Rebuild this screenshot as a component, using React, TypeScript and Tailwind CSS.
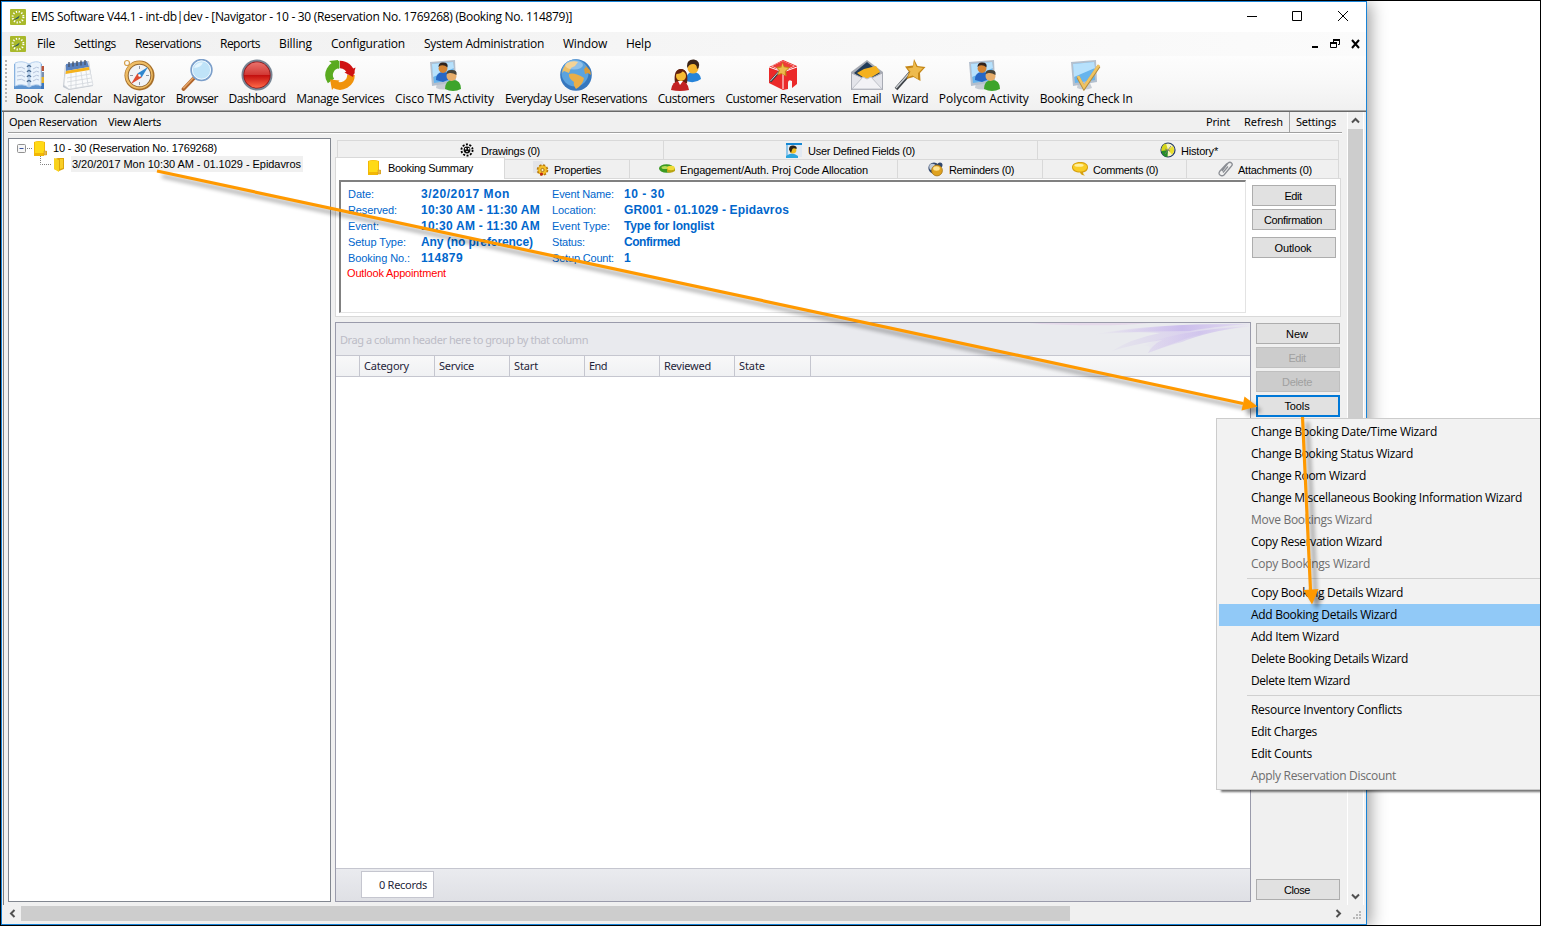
import { useLayoutEffect, useRef, type ReactNode } from "react";

const SEGOE = "font-['Open_Sans',sans-serif] text-[12px]";
const TAHOMA = "font-['Noto_Sans',sans-serif] text-[11px]";
const MSSANS = "font-['Liberation_Sans',sans-serif] text-[11px]";
const MSBOLD = "font-['Liberation_Sans',sans-serif] text-[12px] font-bold";

/* A single line of text whose tracking is adjusted to fill a given width. */
function Fit({ w, children, className = "" }: { w: number; children: string; className?: string }) {
  const ref = useRef<HTMLSpanElement>(null);
  useLayoutEffect(() => {
    const el = ref.current;
    if (!el) return;
    el.style.letterSpacing = "0px";
    const natural = el.getBoundingClientRect().width;
    el.style.letterSpacing = `${(w - natural) / children.length}px`;
  }, [w, children]);
  return (
    <span ref={ref} className={`inline-block shrink-0 whitespace-pre leading-4 ${className}`}>
      {children}
    </span>
  );
}

function AppIcon() {
  return (
    <svg width="16" height="16" viewBox="0 0 16 16" className="shrink-0">
      <rect width="16" height="16" rx="1" fill="#a9b92b" />
      <circle cx="8" cy="8" r="5.4" fill="none" stroke="#fff" strokeWidth="2" strokeDasharray="1.2 1.63" />
      <path d="M2.8 11.6 9.8 6.4 8.4 9.2Z" fill="#24506a" />
    </svg>
  );
}

function I({ children }: { children: ReactNode }) {
  return (
    <svg width="32" height="32" viewBox="0 0 32 32" className="shrink-0">
      {children}
    </svg>
  );
}

const BookIcon = () => (
  <I>
    <path d="M1 5H29V30H1Z" fill="#5c93cf" />
    <path d="M28 7h3v5h-3z" fill="#b8543a" />
    <path d="M28 13h3v5h-3z" fill="#7a8fae" />
    <path d="M28 18h3v6h-3z" fill="#e8b52c" />
    <path d="M28 24h3v6h-3z" fill="#3c76bd" />
    <path d="M2 4Q9 1 16 5Q23 1 28 4V27Q23 24 16 28Q9 24 2 27Z" fill="#eaf3fc" stroke="#b5d0ee" />
    <path d="M16 5V28" stroke="#b9d1ec" strokeWidth="3" />
    <path d="M4 9q5-2 8 1M4 13q5-2 8 1M4 17q5-2 8 1M4 21q5-2 8 1M20 10q4-3 6-1M20 14q4-3 6-1M20 18q4-3 6-1M20 22q4-3 6-1" fill="none" stroke="#b7c5dc" />
    <path d="M14 8q2-3 4 0M14 13q2-3 4 0M14 18q2-3 4 0M14 23q2-3 4 0" fill="none" stroke="#4a6c92" strokeWidth="1.3" />
  </I>
);
const CalendarIcon = () => (
  <I>
    <path d="M3 6 27 2 31 27 7 31 1 28Z" fill="#c3c9d1" />
    <path d="M4 7 26 3 31 26 7 30 2 26Z" fill="#fafbfc" stroke="#d8dbe0" strokeWidth=".7" />
    <path d="M4 5 25 2 27 8 4 12Z" fill="#5a82bf" />
    <path d="M4 12 27 8 27.5 11 3.5 15Z" fill="#f5b21b" />
    <path d="M7 3v5M11 2.5v5M15 2v5M19 1.5v5M23 1v5" stroke="#48556c" strokeWidth="1.4" />
    <path d="M5 19 28 15M5 23 29 19M6 27 30 23M9 14v15M14 13v16M19 13l2 14M24 12l2 14" stroke="#d5d9df" strokeWidth=".9" />
  </I>
);
const CompassIcon = () => (
  <I>
    <circle cx="4" cy="4" r="2.5" fill="none" stroke="#d6a24d" strokeWidth="1.2" />
    <circle cx="16.5" cy="16.5" r="15" fill="#a8702a" />
    <circle cx="16" cy="16" r="13.8" fill="#efbd65" />
    <circle cx="16.5" cy="16.5" r="11.8" fill="#8e6330" />
    <circle cx="16.5" cy="16.5" r="10.8" fill="#f1f3f6" />
    <path d="M16.5 7v3M16.5 23v3M7 16.5h3M23 16.5h3" stroke="#8b95a3" />
    <path d="M25 8 18.6 18.6 14.4 14.4Z" fill="#2f87cf" />
    <path d="M8 25 18.6 18.6 14.4 14.4Z" fill="#dd4b31" />
    <circle cx="16.5" cy="16.5" r="1.2" fill="#fff" />
  </I>
);
const SearchIcon = () => (
  <I>
    <path d="M13 19 2.500 30" stroke="#b1662b" strokeWidth="3.800" strokeLinecap="round" />
    <path d="M12.500 18.500 2.300 29.300" stroke="#e5a568" strokeWidth="1.500" />
    <circle cx="20.5" cy="11" r="10.3" fill="#bfe3f8" stroke="#7c9fca" strokeWidth="1.8" />
    <circle cx="20.5" cy="11" r="9.1" fill="none" stroke="#eff8fe" strokeWidth="1" />
    <path d="M13 9q2-6 9-5.500-2 5-9 5.500Z" fill="#effaff" opacity=".8" />
  </I>
);
const DashIcon = () => (
  <I>
    <defs>
      <linearGradient id="dash" x1="0" y1="0" x2="0" y2="1">
        <stop offset="0" stopColor="#e9726c" />
        <stop offset=".48" stopColor="#d23a36" />
        <stop offset=".52" stopColor="#c4100f" />
        <stop offset="1" stopColor="#ff6a48" />
      </linearGradient>
    </defs>
    <circle cx="16" cy="16" r="15.5" fill="#778493" />
    <circle cx="16" cy="16" r="13.6" fill="#911317" />
    <circle cx="16" cy="16" r="12.8" fill="url(#dash)" />
  </I>
);
const ServicesIcon = () => (
  <I>
    <path d="M15.500 5.500A10.500 10.500 0 0 0 7 22" fill="none" stroke="#5aab20" strokeWidth="7.600" />
    <path d="M27 15A11 11 0 0 0 16 5.500" fill="none" stroke="#cf1212" strokeWidth="7.600" />
    <path d="M10.500 25.500A11 11 0 0 0 27 16" fill="none" stroke="#f0930c" strokeWidth="7.600" />
    <path d="M5 2 14 1 15 10Z" fill="#5aab20" />
    <path d="M31.500 8.500 29 18 20.500 13.500Z" fill="#cf1212" />
    <path d="M6 20.500 15.500 21.500 8 31Z" fill="#f0930c" />
  </I>
);
const MonitorBase = () => (
  <>
    <path d="M8 24h12l2 5q-8 3-15 0Z" fill="#c6ccd4" />
    <path d="M1 3 26 1 27 23 3 27Z" fill="#b4c0ce" />
    <path d="M3 5 24 3 25 21 5 24Z" fill="#67b4ed" />
    <path d="M3 5 24 3 25 9 4 18Z" fill="#b7e1fc" />
  </>
);
const CiscoIcon = () => (
  <I>
    <MonitorBase />
    <path d="M7 21q0-8 7-8t7 7l-7 3Z" fill="#2767c5" />
    <circle cx="14" cy="9.5" r="4.4" fill="#d38332" />
    <path d="M9.500 8q0-5 5-4.500 5 0 4 5-3-3-7-2Z" fill="#31231c" />
    <path d="M16 30q0-9 8-9t8 9q-8 4-16 0Z" fill="#3da42b" />
    <circle cx="22.5" cy="17" r="5" fill="#e7ad6b" />
    <path d="M17.500 15q0-4.500 5.500-4 5.500 0 4.500 5-4-2.500-7-2Z" fill="#484339" />
  </I>
);
const GlobeIcon = () => (
  <I>
    <circle cx="16" cy="16" r="15.8" fill="#3677be" />
    <circle cx="15" cy="14" r="13.5" fill="#5ba3df" />
    <path d="M7 4q6-3 11-1l-3 4-4 2-2 5-5-2-2 2Q3 8 7 4Z" fill="#edbe65" />
    <path d="M9 15q6-2 15 4-1 7-8 11-3-4-2-7-6-4-5-8Z" fill="#e9ae48" />
    <path d="M24 6q7 4 7 10l-3-2-3 1-1-5 2-2Z" fill="#d99b3a" />
    <ellipse cx="14" cy="6" rx="9" ry="4.5" fill="#fff" opacity=".32" />
  </I>
);
const CustomersIcon = () => (
  <I>
    <path d="M16 22q0-9 7-9 7 0 8 7-6 5-15 2Z" fill="#2784d9" />
    <circle cx="23" cy="9" r="5.5" fill="#f5b42c" />
    <path d="M17 7q0-7 7-6.500 7 1.500 4.500 8.500l-1.500 1q0-5-4-5-4 0-5.500 4Z" fill="#3b2418" />
    <path d="M5 24q-2-14 6-14 8 1 6 14Z" fill="#62200f" />
    <path d="M1 31q1-9 9-9t9 9q-9 2-18 0Z" fill="#c32122" />
    <path d="m8 22 2 4 3-4Z" fill="#fff" />
    <circle cx="11" cy="17" r="5" fill="#f6bc35" />
    <path d="M6 15q5 0 7-3l4 3q-2-5-6-5t-5 5Z" fill="#62200f" />
  </I>
);
const Wand = () => (
  <>
    <path d="M17 13 2 30" stroke="#3c4045" strokeWidth="3.5" />
    <path d="M15.500 14 2 29" stroke="#c9cdd1" strokeWidth="1.5" />
    <path d="m20 0 3.500 7 8 1-5.500 6 .5 8-7-4-7 2 2.500-7-4-5.500 8-1Z" fill="#c58717" />
    <path d="m20 2 2.500 6 6.500 1-5 5v6l-5.500-3.500-4.500 1.500 2.500-5.500-3-3 5.500-1Z" fill="#eebb4d" />
  </>
);
const CubeIcon = () => (
  <I>
    <path d="m16 1 14 6v18l-5 4v-7q-4-2-4 2v6l-5 1-14-7V8Z" fill="#eb2929" />
    <path d="m4 7 12-5 12 5-12 6Z" fill="#f4f4f4" />
    <path d="m5 7 11-5 11 5-11 5Z" fill="#ee3b37" />
    <path d="M2 8 16 13v17M16 13 30 8" fill="none" stroke="#fff" />
    <g transform="translate(2 3) scale(.66)"><Wand /></g>
  </I>
);
const EmailIcon = () => (
  <I>
    <path d="M0 13 16 1 32 13V31H0Z" fill="#a5a9b2" />
    <path d="m3 14 13-11 13 11-13 10Z" fill="#213b59" />
    <path d="m6 14 7-4 12-3 4 6-13 8Z" fill="#f5b11e" />
    <path d="M.5 14 16 21 31.500 14V30.500H.5Z" fill="#e3e4ea" stroke="#a8abb4" />
    <path d="m1 30 11-12 4 2 4-2 11 12Z" fill="#f2f2f6" stroke="#bfc2ca" />
  </I>
);
const WandIcon = () => <I><Wand /></I>;
const CheckInIcon = () => (
  <I>
    <MonitorBase />
    <path d="m8 18 6 11L29 7" fill="none" stroke="#b38b3c" strokeWidth="3.4" />
    <path d="m8 17 6 11L29 6" fill="none" stroke="#efc361" strokeWidth="2.6" />
  </I>
);

const TOOLBAR: [string, number, () => ReactNode][] = [
  ["Book", 28, BookIcon],
  ["Calendar", 48, CalendarIcon],
  ["Navigator", 52, CompassIcon],
  ["Browser", 42, SearchIcon],
  ["Dashboard", 57, DashIcon],
  ["Manage Services", 88, ServicesIcon],
  ["Cisco TMS Activity", 99, CiscoIcon],
  ["Everyday User Reservations", 142, GlobeIcon],
  ["Customers", 57, CustomersIcon],
  ["Customer Reservation", 116, CubeIcon],
  ["Email", 29, EmailIcon],
  ["Wizard", 36, WandIcon],
  ["Polycom Activity", 90, CiscoIcon],
  ["Booking Check In", 93, CheckInIcon],
];

const MENUS: [string, number][] = [
  ["File", 18], ["Settings", 42], ["Reservations", 66], ["Reports", 40], ["Billing", 33],
  ["Configuration", 74], ["System Administration", 120], ["Window", 44], ["Help", 25],
];

const Folder = () => (
  <svg width="14" height="15" viewBox="0 0 14 15" className="shrink-0">
    <path d="M0 1q5-2 11 0v9h2v4h-3v1H0Z" fill="#f2b705" />
    <path d="M1 1q5-1 9 0v11H1Z" fill="#ffda16" />
    <path d="M10 10h2.500v4H10Z" fill="#e9b84d" stroke="#c99727" strokeWidth=".5" />
  </svg>
);
const OpenFolder = () => (
  <svg width="11" height="15" viewBox="0 0 11 15" className="shrink-0">
    <path d="M0 2 4 1h6v11L5 14 0 12Z" fill="#dca60b" />
    <path d="m0 1 5 2v12l-5-3Z" fill="#f9d21d" />
    <path d="M6 2h3v9l-3 1Z" fill="#f9ce26" />
  </svg>
);

function S({ children }: { children: ReactNode }) {
  return <svg width="16" height="16" viewBox="0 0 16 16" className="shrink-0">{children}</svg>;
}
const DrawingsIcon = () => (
  <S>
    <circle cx="8" cy="8" r="5.600" fill="none" stroke="#000" strokeWidth="1.800" strokeDasharray="2 1.52" />
    <circle cx="8" cy="8" r="3.400" fill="#111" />
    <path d="M6 6h1.400v1.400H6ZM9 6h1.400v1.400H9ZM7.300 9h1.400v1H7.300Z" fill="#fff" />
  </S>
);
const UserIcon = () => (
  <S>
    <path d="M0 1h16v14H0Z" fill="#e2e9f2" />
    <path d="M0 1h16v2H0Z" fill="#1688d4" />
    <path d="M0 3h2v12H0Z" fill="#8ec6ea" />
    <path d="M0 16v-2q6-5 12 0v2Z" fill="#2ba5dd" />
    <circle cx="7" cy="8" r="3.400" fill="#f0bd21" />
    <path d="M3 7.500q0-4.500 4.500-4 4 .5 3 3.500-4-2-4.500 1l-1 3Z" fill="#2a2016" />
  </S>
);
const HistoryIcon = () => (
  <S>
    <circle cx="8" cy="8" r="7" fill="#f7f5bd" stroke="#243968" strokeWidth="1.200" />
    <path d="M8 8 6 1.500Q1 3 1.500 9l2.500 4Z" fill="#d4d51b" />
    <path d="m8 8-6.500 1q1 6 6 6Z" fill="#258d29" />
    <path d="m8 8 5-4q2.500 5-1 8.500Z" fill="#e8dd2a" />
    <path d="m5 12 6-8M5 7l5 2" stroke="#777" strokeWidth=".8" />
  </S>
);
const GearIcon = () => (
  <S>
    <path d="M0 0h9l2 3v9H0Z" fill="#e3e4e8" />
    <circle cx="9.5" cy="9" r="4.800" fill="#e4a513" stroke="#b77a0e" strokeWidth="2" strokeDasharray="2.1 1.67" />
    <circle cx="9.5" cy="9" r="4.200" fill="#f5bf29" />
    <circle cx="9.5" cy="9" r="1.600" fill="#fff1ac" stroke="#92601a" strokeWidth=".8" />
    <circle cx="8.500" cy="13" r="1.600" fill="#bf2c18" />
  </S>
);
const MoneyIcon = () => (
  <S>
    <ellipse cx="7.500" cy="7.500" rx="7.500" ry="4.200" fill="#3b9a22" />
    <ellipse cx="6" cy="6.500" rx="3.500" ry="1.500" fill="#b6dd58" />
    <path d="M8 7h8v3q-4 3-8 1Z" fill="#b9a513" />
    <ellipse cx="12" cy="7" rx="3.800" ry="2.200" fill="#f0db37" />
  </S>
);
const ReminderIcon = () => (
  <S>
    <circle cx="6" cy="7" r="5.600" fill="#31476d" />
    <circle cx="4.500" cy="6" r="3.300" fill="#c0cad7" />
    <circle cx="12" cy="4" r="2.500" fill="#31476d" />
    <circle cx="9" cy="9.500" r="5.400" fill="#dfa220" stroke="#a47318" strokeWidth=".8" />
    <ellipse cx="8.500" cy="7.500" rx="3.300" ry="2.200" fill="#ffe391" />
  </S>
);
const CommentIcon = () => (
  <S>
    <path d="M8 1c5 0 8 2 8 5.200S13.500 11 11 11.500q0 2 2 3-4 0-5-3c-4.500 0-8-2-8-5.100S3 1 8 1Z" fill="#d6a010" />
    <path d="M8 2c4 0 7 1.600 7 4S12 10.500 8 10.500 1 8.500 1 6 4 2 8 2Z" fill="#f9cd25" />
    <ellipse cx="7" cy="4.200" rx="4.600" ry="1.500" fill="#fff0a0" />
  </S>
);
const ClipIcon = () => (
  <S>
    <path d="m5 10 6-8q2-1.500 3.500 0t0 3L7 14q-2 1.500-4 0t0-4l7-7.500M6 11.500l5-6" fill="none" stroke="#8b8e94" strokeWidth="1.300" />
  </S>
);

function Tab({ icon, text, w, className }: { icon: ReactNode; text: string; w: number; className: string }) {
  return (
    <div className={`flex h-full shrink-0 items-center border-r border-[#d9d9d9] ${className}`}>
      {icon}
      <Fit w={w} className={`${MSSANS} translate-y-px`}>{text}</Fit>
    </div>
  );
}

function Btn({ text, w, kind = "normal", className = "" }: { text: string; w: number; kind?: "normal" | "disabled" | "focus"; className?: string }) {
  const look =
    kind === "disabled"
      ? "h-[21px] border border-[#bfbfbf] bg-[#cccccc] text-[#a0a0a0]"
      : kind === "focus"
        ? "h-[22px] border-2 border-[#0078d7] bg-[#e1e1e1]"
        : "h-[21px] border border-[#adadad] bg-[#e1e1e1]";
  return (
    <button className={`flex w-[84px] shrink-0 items-center justify-center pr-0.5 ${look} ${className}`}>
      <Fit w={w} className={MSSANS}>{text}</Fit>
    </button>
  );
}

const INFO: [string, number, string, number, string, number, string, number][] = [
  ["Date:", 26, "3/20/2017 Mon", 89, "Event Name:", 62, "10 - 30", 41],
  ["Reserved:", 49, "10:30 AM - 11:30 AM", 119, "Location:", 44, "GR001 - 01.1029 - Epidavros", 165],
  ["Event:", 31, "10:30 AM - 11:30 AM", 119, "Event Type:", 58, "Type for longlist", 90],
  ["Setup Type:", 58, "Any (no preference)", 112, "Status:", 33, "Confirmed", 56],
  ["Booking No.:", 62, "114879", 42, "Setup Count:", 62, "1", 7],
];

const COLUMNS: [string, number, string][] = [
  ["Category", 45, "w-[75px]"], ["Service", 35, "w-[75px]"], ["Start", 24, "w-[75px]"],
  ["End", 18, "w-[75px]"], ["Reviewed", 47, "w-[75px]"], ["State", 26, "w-[76px]"],
];

const POPUP: ([string, number, string?] | null)[] = [
  ["Change Booking Date/Time Wizard", 186],
  ["Change Booking Status Wizard", 162],
  ["Change Room Wizard", 115],
  ["Change Miscellaneous Booking Information Wizard", 271],
  ["Move Bookings Wizard", 121, "off"],
  ["Copy Reservation Wizard", 131],
  ["Copy Bookings Wizard", 119, "off"],
  null,
  ["Copy Booking Details Wizard", 152],
  ["Add Booking Details Wizard", 146, "on"],
  ["Add Item Wizard", 88],
  ["Delete Booking Details Wizard", 157],
  ["Delete Item Wizard", 99],
  null,
  ["Resource Inventory Conflicts", 151],
  ["Edit Charges", 66],
  ["Edit Counts", 61],
  ["Apply Reservation Discount", 145, "off"],
];

function Chevron({ d, className = "" }: { d: string; className?: string }) {
  return (
    <svg width="9" height="9" viewBox="0 0 9 9" className={`shrink-0 ${className}`}>
      <path d={d} fill="none" stroke="#505050" strokeWidth="2" />
    </svg>
  );
}

function TreePane() {
  return (
    <div className="h-[764px] w-[323px] shrink-0 border border-[#828790] bg-white pt-px">
      <div className="flex h-4 items-center pl-2">
        <svg width="17" height="16" viewBox="0 0 17 16" className="shrink-0">
          <rect x=".5" y="4.500" width="8" height="8" rx="1" fill="#f7f7f7" stroke="#919191" />
          <path d="M2.500 8.500h4" stroke="#3b54a0" />
          <path d="M10 8.500h6" stroke="#808080" strokeDasharray="1 1" />
        </svg>
        <Folder />
        <Fit w={164} className={`${MSSANS} ml-[5px]`}>10 - 30 (Reservation No. 1769268)</Fit>
      </div>
      <div className="flex h-4 items-center pl-[30px]">
        <svg width="15" height="16" viewBox="0 0 15 16" className="shrink-0">
          <path d="M1.500 0V8.500H12" fill="none" stroke="#808080" strokeDasharray="1 1" />
        </svg>
        <OpenFolder />
        <div className="ml-1.5 flex h-4 w-[232px] items-center bg-[#f0f0f0] pl-px">
          <Fit w={229} className={MSSANS}>3/20/2017 Mon 10:30 AM - 01.1029 - Epidavros</Fit>
        </div>
      </div>
    </div>
  );
}

function DetailPane() {
  return (
    <div className="ml-1 flex w-[1010px] shrink-0 flex-col">
      <div className="ml-0.5 mt-0.5 flex h-[19px] w-[1002px] border-l border-t border-[#d9d9d9]">
        <Tab className="w-[326px] gap-1.5 pl-[121px]" icon={<DrawingsIcon />} text="Drawings (0)" w={59} />
        <Tab className="w-[374px] gap-1.5 pl-[122px]" icon={<UserIcon />} text="User Defined Fields (0)" w={107} />
        <Tab className="w-[301px] gap-[5px] pl-[122px]" icon={<HistoryIcon />} text="History*" w={37} />
      </div>
      <div className="ml-0.5 flex h-[19px] w-[1002px]">
        <div className="relative z-10 -ml-0.5 -mt-0.5 flex h-[22px] w-[170px] shrink-0 items-center gap-1.5 border-l border-r border-t border-[#d9d9d9] bg-white pb-0.5 pl-8">
          <Folder />
          <Fit w={85} className={MSSANS}>Booking Summary</Fit>
        </div>
        <div className="flex flex-1 border-t border-[#d9d9d9]">
          <Tab className="w-[125px] gap-[5px] pl-7" icon={<GearIcon />} text="Properties" w={47} />
          <Tab className="w-[268px] gap-[5px] pl-[29px]" icon={<MoneyIcon />} text="Engagement/Auth. Proj Code Allocation" w={188} />
          <Tab className="w-[145px] gap-[5px] pl-[30px]" icon={<ReminderIcon />} text="Reminders (0)" w={65} />
          <Tab className="w-[144px] gap-[5px] pl-[29px]" icon={<CommentIcon />} text="Comments (0)" w={65} />
          <Tab className="w-[152px] gap-[5px] pl-[30px]" icon={<ClipIcon />} text="Attachments (0)" w={74} />
        </div>
      </div>
      <div className="flex h-[139px] w-[1006px] border border-[#d9d9d9] bg-white">
        <div className="ml-[3px] mt-px h-[133px] w-[907px] shrink-0 border-b border-l-2 border-r border-t-2 border-b-[#e3e3e3] border-l-[#808080] border-r-[#e3e3e3] border-t-[#808080] pl-[7px] pt-1 text-[#0066cc]">
          {INFO.map((r) => (
            <div key={r[0]} className="flex h-4 items-center">
              <div className="flex w-[73px]"><Fit w={r[1]} className={MSSANS}>{r[0]}</Fit></div>
              <div className="flex w-[131px]"><Fit w={r[3]} className={MSBOLD}>{r[2]}</Fit></div>
              <div className="flex w-[72px]"><Fit w={r[5]} className={MSSANS}>{r[4]}</Fit></div>
              <Fit w={r[7]} className={MSBOLD}>{r[6]}</Fit>
            </div>
          ))}
          <div className="-ml-px -mt-px flex h-4 items-center text-[#ff0000]">
            <Fit w={99} className={MSSANS}>Outlook Appointment</Fit>
          </div>
        </div>
        <div className="ml-1.5 flex flex-col pt-1.5">
          <Btn text="Edit" w={17} />
          <Btn text="Confirmation" w={58} className="mt-[3px]" />
          <Btn text="Outlook" w={37} className="mt-[7px]" />
        </div>
      </div>
      <div className="mt-[5px] flex">
        <div className="flex h-[580px] w-[916px] flex-col border border-[#9a9bab] bg-white">
          <div className="flex h-8 shrink-0 items-center justify-between bg-[#e9eaee] pl-1">
            <Fit w={248} className={`${TAHOMA} mt-0.5 text-[#bcbcc6]`}>Drag a column header here to group by that column</Fit>
            <svg width="220" height="32" viewBox="0 0 220 32" className="shrink-0">
              <defs>
                <linearGradient id="wave" x1="0" x2="1">
                  <stop offset="0" stopColor="#dccff0" stopOpacity="0" />
                  <stop offset=".55" stopColor="#cbbdec" />
                  <stop offset="1" stopColor="#e3dcf0" />
                </linearGradient>
                <linearGradient id="veil" x1="0" x2="1">
                  <stop offset="0" stopColor="#d4cae8" stopOpacity="0" />
                  <stop offset=".6" stopColor="#d4c8ee" stopOpacity=".7" />
                  <stop offset="1" stopColor="#e3dcf0" stopOpacity=".2" />
                </linearGradient>
              </defs>
              <path d="M0 0H120Q80 4 10 1Z" fill="#e3d5e8" opacity=".8" />
              <path d="M60 12Q120 2 219 0V4Q170 9 150 18L118 30Q122 22 132 17 100 22 82 28 100 16 130 10 100 8 60 12Z" fill="url(#veil)" />
              <path d="M70 10Q130 0 219 1 180 4 160 8 130 8 70 10Z" fill="url(#wave)" />
              <path d="M110 24Q140 8 219 3 175 9 152 19 140 22 118 30 124 20 110 24Z" fill="url(#wave)" opacity=".7" />
            </svg>
          </div>
          <div className="flex h-[22px] shrink-0 border-b border-t border-[#c5c6cf] bg-gradient-to-b from-[#f8f8f9] to-[#f0f1f3] text-[#1f1f3a]">
            <div className="w-6 border-r border-[#c5c6cf]" />
            {COLUMNS.map(([t, w, cls]) => (
              <div key={t} className={`flex items-center border-r border-[#c5c6cf] pb-px pl-1 ${cls}`}>
                <Fit w={w} className={TAHOMA}>{t}</Fit>
              </div>
            ))}
          </div>
          <div className="flex-1" />
          <div className="flex h-[33px] shrink-0 border-t border-[#c5c6cf] bg-gradient-to-b from-[#eaebef] to-[#dfe0e5] pl-[25px] pt-0.5">
            <div className="flex h-[27px] w-[73px] items-center justify-end border border-[#c5c6cf] bg-white pr-1.5 pt-px text-[#1f1f3a]">
              <Fit w={48} className={TAHOMA}>0 Records</Fit>
            </div>
          </div>
        </div>
        <div className="ml-[5px] flex h-[580px] flex-col pt-px">
          <Btn text="New" w={22} />
          <Btn text="Edit" w={17} kind="disabled" className="mt-[3px]" />
          <Btn text="Delete" w={30} kind="disabled" className="mt-[3px]" />
          <Btn text="Tools" w={25} kind="focus" className="mt-[3px]" />
          <Btn text="Close" w={26} className="mb-0.5 mt-auto" />
        </div>
      </div>
    </div>
  );
}

export default function App() {
  return (
    <div className="relative h-[926px] w-[1541px] overflow-hidden border border-black bg-white text-black">
      <div className="flex h-[924px] w-[1366px] flex-col border border-[#1883d7] bg-[#f0f0f0] shadow-[3px_2px_16px_rgba(0,0,0,0.4)]">
        <div className="flex h-[30px] shrink-0 items-center bg-white pl-2">
          <AppIcon />
          <Fit w={541} className={`${SEGOE} ml-[5px]`}>EMS Software V44.1 - int-db|dev - [Navigator - 10 - 30 (Reservation No. 1769268) (Booking No. 114879)]</Fit>
          <svg width="104" height="12" viewBox="0 0 104 12" className="ml-auto mr-4">
            <path d="M1 5.500h10M46.500 .5h9v9h-9Z" fill="none" stroke="#000" />
            <path d="m92 0 10 10m0-10-10 10" stroke="#000" />
          </svg>
        </div>
        <div className="flex h-6 shrink-0 items-center bg-gradient-to-r from-[#f0f0f0] to-[#fbfbfb] pl-2">
          <AppIcon />
          <div className="ml-[11px] flex gap-[19px]">
            {MENUS.map(([t, w]) => <Fit key={t} w={w} className={SEGOE}>{t}</Fit>)}
          </div>
          <svg width="52" height="12" viewBox="0 0 52 12" className="ml-auto mr-[5px]">
            <path d="M3 9h6" stroke="#000" strokeWidth="2" />
            <path d="M24.500 4V1.500h6v5H29M21.500 4.500h6v5h-6Z" fill="none" stroke="#000" />
            <path d="M24 2h7M21 5h7" stroke="#000" strokeWidth="2" />
            <path d="m43 2 7 8m0-8-7 8" stroke="#000" strokeWidth="2" />
          </svg>
        </div>
        <div className="flex h-[54px] shrink-0 gap-[10.8px] bg-gradient-to-b from-[#fdfdfd] via-[#f8f8f8] to-[#f0f0f0] pl-[3px] pt-[3px]">
          <svg width="2" height="44" viewBox="0 0 2 44" className="-mr-[2.500px] mt-px shrink-0">
            <path d="M1 0v44" stroke="#b4b4b4" strokeWidth="2" strokeDasharray="2 2" />
          </svg>
          {TOOLBAR.map(([t, w, Icon]) => (
            <div key={t} className="flex shrink-0 flex-col items-center" style={{ width: w }}>
              <Icon />
              <Fit w={w} className={SEGOE}>{t}</Fit>
            </div>
          ))}
        </div>
        <div className="h-0.5 shrink-0 border-b border-t border-b-[#696969] border-t-[#a8a8a8]" />
        <div className="flex h-[793px] shrink-0">
          <div className="ml-px w-px bg-[#808080]" />
          <div className="flex w-[1341px] flex-col pl-1">
            <div className="flex h-[21px] w-[1334px] shrink-0 items-center border-b border-[#a0a0a0] pl-px shadow-[0_1px_0_#fff]">
              <Fit w={88} className={TAHOMA}>Open Reservation</Fit>
              <Fit w={53} className={`${TAHOMA} ml-[11px]`}>View Alerts</Fit>
              <Fit w={24} className={`${TAHOMA} ml-auto`}>Print</Fit>
              <Fit w={39} className={`${TAHOMA} ml-3.5`}>Refresh</Fit>
              <div className="ml-1.5 h-full w-px bg-[#a0a0a0]" />
              <Fit w={40} className={`${TAHOMA} ml-1.5 mr-1.5`}>Settings</Fit>
            </div>
            <div className="flex pt-[5px]">
              <TreePane />
              <DetailPane />
            </div>
          </div>
          <div className="ml-0.5 flex w-[17px] shrink-0 flex-col items-center border-l border-r border-white">
            <Chevron d="M1 6.500 4.500 3 8 6.500" className="mt-1" />
            <div className="mt-1 h-[520px] w-[15px] bg-[#cdcdcd]" />
            <Chevron d="M1 2.500 4.500 6 8 2.500" className="mb-1 mt-auto" />
          </div>
        </div>
        <div className="flex h-4 shrink-0 items-center">
          <Chevron d="M6.500 1 3 4.500 6.500 8" className="ml-1.5" />
          <div className="ml-1 h-[15px] w-[1049px] bg-[#cdcdcd]" />
          <Chevron d="M2.500 1 6 4.500 2.500 8" className="ml-[264px]" />
          <svg width="10" height="10" viewBox="0 0 10 10" className="ml-[9px] mt-1.5">
            <path d="M7 0h2v2H7zM4 3h2v2H4zM7 3h2v2H7zM1 6h2v2H1zM4 6h2v2H4zM7 6h2v2H7z" fill="#b9b9b9" />
          </svg>
        </div>
      </div>

      <div className="absolute left-[1215px] top-[417px] flex h-[372px] w-[326px] flex-col border border-[#cccccc] bg-[#f2f2f2] pl-0.5 pt-0.5 shadow-[4px_3px_2px_-1px_rgba(0,0,0,0.55)]">
        {POPUP.map((p, i) =>
          p ? (
            <div
              key={p[0]}
              className={`flex h-[22px] shrink-0 items-center pl-8 ${p[2] === "on" ? "bg-[#91c9f7]" : ""} ${p[2] === "off" ? "text-[#6d6d6d]" : ""}`}
            >
              <Fit w={p[1]} className={SEGOE}>{p[0]}</Fit>
            </div>
          ) : (
            <div key={i} className="ml-7 h-[7px] shrink-0 pt-[3px]">
              <div className="h-px bg-[#d0d0d0]" />
            </div>
          ),
        )}
      </div>

      <svg width="1541" height="926" viewBox="0 0 1541 926" className="pointer-events-none absolute -left-px -top-px">
        <defs>
          <filter id="soft" x="0" y="0" width="1541" height="926" filterUnits="userSpaceOnUse">
            <feGaussianBlur stdDeviation="2" />
          </filter>
        </defs>
        <g transform="translate(5 5)" opacity=".38" filter="url(#soft)">
          <path d="M157 171 1243 403.500M1302.500 417 1310.500 590" stroke="#000" strokeWidth="3.200" />
          <path d="m1244.500 396.500 12.500 9.500-15.500 4.500ZM1304 589.500h14.500L1312 604.500Z" fill="#000" />
        </g>
        <path d="M157 171 1243 403.500M1302.500 417 1310.500 590" stroke="#ff9900" strokeWidth="3.200" />
        <path d="M1244.500 396.500 1257.500 406.500 1241.500 410.500ZM1303.500 590 1318.500 589 1312 604.500Z" fill="#ff9900" />
      </svg>
      <div className="absolute right-0 top-0 h-full w-px translate-x-px bg-black" />
    </div>
  );
}
